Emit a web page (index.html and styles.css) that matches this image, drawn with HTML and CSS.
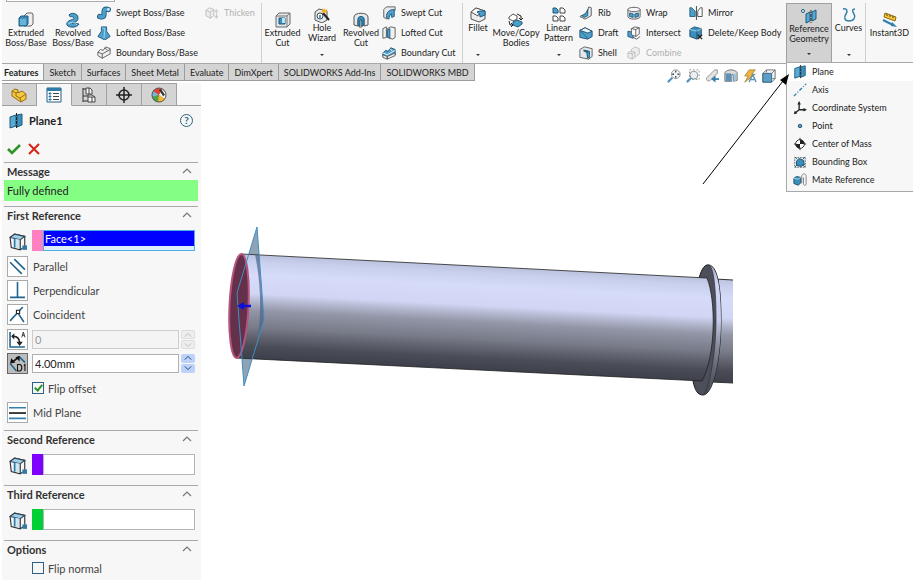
FILE: index.html
```html
<!DOCTYPE html>
<html lang="en">
<head>
<meta charset="utf-8">
<title>Plane1</title>
<link rel="stylesheet" href="styles.css">
</head>
<body>
<svg class="sprite" aria-hidden="true">
  <symbol id="extrude" viewBox="0 0 16 16"><path d="M6 4l3-3h5l1 1v10l-2 2H6z" fill="#eee" stroke="#666"/><path d="M1 6l2-2h7v8l-2 2H1z" fill="#3c8fbd" stroke="#1c5a7d"/><path d="M2 7h6v6H2z" fill="#68b3da"/></symbol>
  <symbol id="revolve" viewBox="0 0 16 16"><path d="M4 3c2-3 9-2 9 3 0 4-3 4-6 5l7 1c-2 4-10 4-12 1-1-2 1-4 4-5s4-2 2-3-3 1-4-2z" fill="#4f9fcb" stroke="#1c5a7d"/><path d="M3 12c3-2 5-3 9 1" fill="none" stroke="#b5dcf0"/></symbol>
  <symbol id="sweep" viewBox="0 0 16 16"><path d="M3 12c6 2 5-2 5-5s1-4 5-3" fill="none" stroke="#1c5a7d" stroke-width="6" stroke-linecap="round"/><path d="M3 12c6 2 5-2 5-5s1-4 5-3" fill="none" stroke="#4f9fcb" stroke-width="4" stroke-linecap="round"/><circle cx="13" cy="4" r="1.6" fill="#c4e3f3"/></symbol>
  <symbol id="loft" viewBox="0 0 16 16"><path d="M5 1h6l0 5 4 6-6 4-8-4 4-6z" fill="#4f9fcb" stroke="#1c5a7d"/><path d="M6 2l3 1-1 11" fill="none" stroke="#a7d6ee"/></symbol>
  <symbol id="boundary" viewBox="0 0 16 16"><path d="M1 7l3-3 3 1 3-4 5 2v6l-9 5-5-3z" fill="#f1f1f1" stroke="#555"/><path d="M1 7l5 2 9-5M6 9v5M9 2l3 3" fill="none" stroke="#555"/></symbol>
  <symbol id="thicken" viewBox="0 0 16 16"><path d="M1 5l4-3 5 2v7l-4 3-5-3z" fill="#eee" stroke="#bbb"/><path d="M1 5l5 2 4-3M6 7v7M13 6v7M11 11l2 3 2-3M11 7l2-3 2 3" fill="none" stroke="#bbb"/></symbol>
  <symbol id="cut" viewBox="0 0 16 16"><path d="M1 4l3-3h11v11l-3 3H1z" fill="#e4e6e8" stroke="#666"/><path d="M1 4h11v11M12 4l3-3" fill="none" stroke="#777"/><path d="M4 6h6v6H4z" fill="#3c8fbd" stroke="#1c5a7d"/><path d="M7 6h3v5H7z" fill="#b9e0f3"/></symbol>
  <symbol id="wizard" viewBox="0 0 16 16"><path d="M1 5l4-3 8 2v9l-5 3-7-3z" fill="#e7e8ea" stroke="#555"/><circle cx="6" cy="9" r="3" fill="#fff" stroke="#444"/><path d="M5 8h2v3H5z" fill="#4f9fcb"/><path d="M9 6l6 7" stroke="#222" stroke-width="2"/><path d="M8 1l1 2 2-2 0 2 3-1-2 2 2 1-4 1-3-1 1-1z" fill="#f2b02c"/></symbol>
  <symbol id="revcut" viewBox="0 0 16 16"><path d="M1 5c0-5 14-5 14 0v8l-4 1V7H9v8L6 15V8l-1 0v6l-4-1z" fill="#e9eaec" stroke="#555"/><path d="M5 6c1-2 5-2 6 0v7l-2 1V8H7v6l-2-1z" fill="#3c8fbd" stroke="#1c5a7d"/></symbol>
  <symbol id="sweptcut" viewBox="0 0 16 16"><path d="M2 4l3-3h10v4l-3 1-6 9-4-2z" fill="#e9eaec" stroke="#555"/><path d="M5 13c0-6 3-9 9-9v8l-3 1V9c-2 1-3 3-3 6z" fill="#4f9fcb" stroke="#1c5a7d"/></symbol>
  <symbol id="loftcut" viewBox="0 0 16 16"><path d="M1 3l4-2v12l-4 1zM6 3l4-2 5 1v11l-3 2-6-2z" fill="#f0f0f0" stroke="#555"/><path d="M6 5l3-2v11l-3-2z" fill="#4f9fcb" stroke="#1c5a7d"/></symbol>
  <symbol id="boundcut" viewBox="0 0 16 16"><path d="M1 8l3-3 3 1 3-4 5 2v6l-9 4-5-2z" fill="#4f9fcb" stroke="#1c4866"/><path d="M1 8l5 2 9-5M9 3l3 3" fill="none" stroke="#fff"/><path d="M1 10l5 2v3l-5-2zM6 12l9-4v3l-9 4z" fill="#eee" stroke="#555"/></symbol>
  <symbol id="fillet" viewBox="0 0 16 16"><path d="M1 5l5-4 9 3v8l-6 3-8-3z" fill="#ececee" stroke="#555"/><path d="M1 5l5-4 9 3-2 1c-3 0-5 2-5 4z" fill="#f8f8f8" stroke="#555"/><path d="M7 5l3-1 5 0v4l-5 2c0-3-1-4-3-5z" fill="#4f9fcb" stroke="#1c5a7d"/></symbol>
  <symbol id="move" viewBox="0 0 16 16"><path d="M1 5l4-3 4 2v3L5 9 1 7z" fill="#fff" stroke="#555"/><path d="M5 10l4-2 5 2v2l-4 3-5-2z" fill="#4f9fcb" stroke="#1c5a7d"/><path d="M9 2l4 2v3M11 6l2 2 2-2M1 9l1 4h2M3 11l2 2-2 2" fill="none" stroke="#222"/></symbol>
  <symbol id="pattern" viewBox="0 0 16 16"><g fill="#fff" stroke="#444"><path d="M9 1h3l2 2v3H9z"/><path d="M2 9h3l2 2v3H2zM9 9h3l2 2v3H9z"/></g><path d="M2 1h3l2 2v3H2z" fill="#4f9fcb" stroke="#1c5a7d"/></symbol>
  <symbol id="rib" viewBox="0 0 16 16"><path d="M11 1l3 1v9l-7 4-6-3 8-4z" fill="#e5e6e8" stroke="#555"/><path d="M10 4v7l-4 2-3-2c3 0 5-3 7-7z" fill="#4f9fcb" stroke="#1c5a7d"/></symbol>
  <symbol id="draft" viewBox="0 0 16 16"><path d="M1 5l6-3 8 4v6l-5 3-9-2z" fill="#4f9fcb" stroke="#1c4866"/><path d="M1 5l6-3 8 4-5 2z" fill="#e9f4fa" stroke="#1c4866"/><path d="M2 6l8 8" stroke="#1c5a7d"/></symbol>
  <symbol id="shell" viewBox="0 0 16 16"><path d="M1 4l5-3 9 2v9l-4 3-10-2z" fill="#e6e7e9" stroke="#555"/><path d="M5 4l6 1v9l-2-1V8L5 6z" fill="#245f80"/><path d="M9 8l3-2v7l-2 1z" fill="#4f9fcb" stroke="#1c5a7d"/></symbol>
  <symbol id="wrap" viewBox="0 0 16 16"><path d="M1 4v8c0 4 14 4 14 0V4z" fill="#e6e7e9" stroke="#555"/><ellipse cx="8" cy="4" rx="7" ry="2.5" fill="#f6f6f6" stroke="#555"/><path d="M3 8l4 1v4l-4-1zM9 9l4-1v4l-4 1z" fill="#4f9fcb" stroke="#1c5a7d"/></symbol>
  <symbol id="intersect" viewBox="0 0 16 16"><path d="M1 6l6 1v7l-6-2z" fill="#4f9fcb" stroke="#1c5a7d"/><path d="M5 3l4-2 5 1v7l-4 3-5-2z" fill="#fafafa" stroke="#555"/><path d="M5 3l5 1v8M10 4l4-2M7 13l4 2 4-3" fill="none" stroke="#555"/></symbol>
  <symbol id="combine" viewBox="0 0 16 16"><path d="M5 4l4-3 5 2v6l-4 3-5-2z" fill="#eee" stroke="#bbb"/><path d="M1 8l3-2 5 1v6l-3 2-5-2zM1 8l5 1 3-2M6 9v6" fill="#eee" stroke="#bbb"/></symbol>
  <symbol id="mirror" viewBox="0 0 16 16"><path d="M1 2h2l4 4v6H1z" fill="#4f9fcb" stroke="#1c5a7d"/><path d="M8.500 0v16" stroke="#333"/><path d="M15 2h-2l-3 4v6h5z" fill="#fff" stroke="#444"/></symbol>
  <symbol id="delbody" viewBox="0 0 16 16"><path d="M1 4l5-3 8 2v8l-5 4-8-3z" fill="#3c8fbd" stroke="#1c4866"/><path d="M1 4l8 2 5-3" fill="none" stroke="#a7d6ee"/><path d="M9 6v8" stroke="#1c4866"/><path d="M10 10l5 5M15 10l-5 5" stroke="#222" stroke-width="1.500"/></symbol>
  <symbol id="plane" viewBox="0 0 16 16"><path d="M2 4l6-2v11l-6 2z" fill="#58a9d3" stroke="#1c5a7d"/><path d="M9 2l5-1v11l-5 2z" fill="#3c8fbd" stroke="#1c5a7d"/><path d="M8.500 0v16" stroke="#222" stroke-dasharray="3 1"/></symbol>
  <symbol id="refgeo" viewBox="0 0 16 16"><circle cx="2" cy="3" r="1.500" fill="#fff" stroke="#1c5a7d"/><path d="M5 6l4-2v9l-4 2z" fill="#58a9d3" stroke="#1c5a7d"/><path d="M11 4l4-2v9l-4 2z" fill="#58a9d3" stroke="#1c5a7d"/><path d="M10 2v13" stroke="#222" stroke-dasharray="3 1"/></symbol>
  <symbol id="curves" viewBox="0 0 16 16"><path d="M2 2c4-1 5 2 3 5s-2 7 3 7 7-4 5-7-2-5 1-5" fill="none" stroke="#3580ab" stroke-width="1.500"/></symbol>
  <symbol id="instant" viewBox="0 0 16 16"><path d="M3 1l11 4-1 4L2 5z" fill="#f5c33c" stroke="#8a6914"/><path d="M5 2v2M8 3v2M11 4v2" stroke="#5d460b"/><path d="M1 8l10 5" stroke="#2c7eb0" stroke-width="2"/><path d="M10 10l5 5-6-1z" fill="#2c7eb0"/></symbol>
  <symbol id="axis" viewBox="0 0 16 16"><path d="M1 15L15 1" stroke="#2d7ca8" stroke-width="1.500" stroke-dasharray="4 2 1 2"/></symbol>
  <symbol id="coord" viewBox="0 0 16 16"><path d="M7 2v8h7M7 10l-5 4" fill="none" stroke="#222" stroke-width="1.500"/><path d="M7 0l2 4H5zM16 10l-4-2v4zM1 15l1-4 3 3z" fill="#222"/></symbol>
  <symbol id="point" viewBox="0 0 16 16"><circle cx="8" cy="8" r="2" fill="#4f9fcb" stroke="#1c4866"/></symbol>
  <symbol id="mass" viewBox="0 0 16 16"><path d="M8 1v14M1 8h14" stroke="#222"/><circle cx="8" cy="8" r="5" fill="#fff" stroke="#222"/><path d="M8 8V3a5 5 0 0 1 5 5zM8 8v5a5 5 0 0 1-5-5z" fill="#222"/></symbol>
  <symbol id="bbox" viewBox="0 0 16 16"><path d="M2 3h12v11H2z" fill="none" stroke="#555" stroke-dasharray="2 1"/><path d="M4 7l3-3 5 2 1 5-4 2-5-1z" fill="#3c8fbd" stroke="#1c4866"/><path d="M2 2l3 3M14 2l-3 3M2 14l3-3M14 14l-3-3" stroke="#245f80"/></symbol>
  <symbol id="mate" viewBox="0 0 16 16"><path d="M1 6l3-2 5 1v6l-3 3-5-2z" fill="#3c8fbd" stroke="#1c4866"/><path d="M1 6l5 1 3-2" fill="none" stroke="#b5dcf0"/><path d="M10 12V4c0-4 5-4 5 0v8c0 3-3 3-3 0V5" fill="none" stroke="#777"/></symbol>
  <symbol id="part" viewBox="0 0 16 16"><path d="M1 4l3-2 3 1v3l2-1 2-1 4 3v5l-5 3-9-6z" fill="#f6c843" stroke="#93700f"/><path d="M1 4l4 2v3l4 2 6-4M9 11l1 4M5 6l2-1" fill="none" stroke="#93700f"/></symbol>
  <symbol id="props" viewBox="0 0 16 16"><path d="M1 1h14v14H1z" fill="#fff" stroke="#235f86"/><path d="M1 1h14v3H1z" fill="#2d7ca8"/><path d="M3 6h2v1H3zM3 9h2v1H3zM3 12h2v1H3z" fill="#2d7ca8" stroke="#2d7ca8"/><path d="M7 6.500h6M7 9.500h6M7 12.500h6" stroke="#444"/></symbol>
  <symbol id="config" viewBox="0 0 16 16"><path d="M2 1v14M2 2h4M2 9h5M2 14h5" fill="none" stroke="#333"/><path d="M5 1h4l2 2v4H5zM7 8h4l3 2v5H7z" fill="#f5f5f5" stroke="#444"/><path d="M7 10h4v5M11 10l3 0M8 1v6" fill="none" stroke="#444"/></symbol>
  <symbol id="target" viewBox="0 0 16 16"><circle cx="8" cy="8" r="5" fill="none" stroke="#222" stroke-width="1.500"/><path d="M8 0v16M0 8h16" stroke="#222" stroke-width="1.500"/></symbol>
  <symbol id="ball" viewBox="0 0 16 16"><circle cx="8" cy="8" r="7" fill="#e0432d"/><path d="M8 8L2 4a7 7 0 0 0-1 6z" fill="#75b8dc"/><path d="M8 8l-7 2a7 7 0 0 0 6 5z" fill="#49a84b"/><path d="M8 8l-1 7a7 7 0 0 0 7-3z" fill="#f3bb30"/><path d="M8 8l3-6a7 7 0 0 1 3 10z" fill="#eee"/><path d="M8 3l2-1 4 6-2 1z" fill="#333"/><circle cx="8" cy="8" r="7" fill="none" stroke="#555"/></symbol>
  <symbol id="face" viewBox="0 0 16 16"><path d="M1 4l4-3 9 2v9l-4 3-8-2z" fill="#f4f5f6" stroke="#333"/><path d="M1 4l4-3 9 2-4 3z" fill="#9fd0ea" stroke="#345"/><path d="M5 5l5 1v8l-5-1z" fill="#cfe6f3"/><path d="M10 6v9" stroke="#333"/><path d="M5 5v8" stroke="#2d7ca8" stroke-width="1.500"/><path d="M12 11h4v4h-4z" fill="#2d7ca8"/></symbol>
  <symbol id="parallel" viewBox="0 0 16 16"><path d="M1 4l11 11M5 1l10 10" stroke="#1f648d" stroke-width="1.500"/></symbol>
  <symbol id="perp" viewBox="0 0 16 16"><path d="M8 0v14M1 14.500h14" stroke="#1f648d" stroke-width="1.500"/></symbol>
  <symbol id="coin" viewBox="0 0 16 16"><path d="M1 14L13 1M8 6l6 9" stroke="#1f648d" stroke-width="1.500"/><path d="M7 4h3v3H7z" fill="#fff" stroke="#222"/></symbol>
  <symbol id="angle" viewBox="0 0 16 16"><path d="M1 1v14h14" fill="none" stroke="#1f648d" stroke-width="1.500"/><path d="M4 5c4 0 6 3 6 7" fill="none" stroke="#222" stroke-width="1.500"/><path d="M2 5l3-3v6zM10 14l-3-4h6z" fill="#222"/><path d="M12 6l1.500-5 1.500 5M12.500 4h2" fill="none" stroke="#222" stroke-width=".8"/></symbol>
  <symbol id="dist" viewBox="0 0 16 16"><path d="M1 8l6 7M9 1l6 6" stroke="#1f648d" stroke-width="1.500"/><path d="M3 7l6-5" stroke="#111" stroke-width="1.500"/><path d="M1 8l1-5 4 4zM10 1l0 5-4-4z" fill="#111"/><path d="M8 9v6h2q2 0 2-3t-2-3zM14 10l1-1v6" fill="none" stroke="#111"/></symbol>
  <symbol id="mid" viewBox="0 0 16 16"><path d="M0 3.500h16M0 13.500h16" stroke="#3580ab" stroke-width="1.500"/><path d="M0 8.500h16" stroke="#111" stroke-width="1.500"/></symbol>
  <symbol id="caret" viewBox="0 0 10 10"><path d="M1 7l4-4 4 4" fill="none" stroke="currentColor" stroke-width="1.200"/></symbol>
  <symbol id="zoomfit" viewBox="0 0 16 16"><circle cx="10" cy="6" r="5" fill="#f4f7fa" stroke="#888"/><path d="M10 2v2M10 8v2M6 6h2M12 6h2" stroke="#444" stroke-width="1.500"/><path d="M6 10l-5 5" stroke="#5a93bb" stroke-width="2.500"/></symbol>
  <symbol id="zoomarea" viewBox="0 0 16 16"><path d="M4 1h11v11H4z" fill="none" stroke="#888" stroke-dasharray="2 2"/><circle cx="9" cy="7" r="4.500" fill="#e8f0f6" stroke="#888"/><path d="M6 10l-5 5" stroke="#5a93bb" stroke-width="2.500"/></symbol>
  <symbol id="prev" viewBox="0 0 16 16"><path d="M14 1h-3l-9 9c-1 4 2 4 4 3l8-8z" fill="#e4e4e4" stroke="#888"/><path d="M16 11.500h-5" stroke="#3580ab" stroke-width="2"/><path d="M7 11.500l5-4v8z" fill="#3580ab"/></symbol>
  <symbol id="section" viewBox="0 0 16 16"><path d="M1 4c3-4 11-4 14 0v9l-4 1V7L9 6v8H1z" fill="#d8dadc" stroke="#666"/><path d="M2 5h6v9H2z" fill="#5b93bb"/><path d="M11 6l3-1v8l-3 1z" fill="#9cc4df"/></symbol>
  <symbol id="style" viewBox="0 0 16 16"><path d="M7 1l7 0-4 5h4l-12 9 4-7H2z" fill="#f3b43b" stroke="#a98540"/><path d="M7 15l4-9 4 9M8 12h6" fill="none" stroke="#5a93bb" stroke-width="1.500"/></symbol>
  <symbol id="view" viewBox="0 0 16 16"><path d="M1 5l4-4h10v10l-4 4H1z" fill="#f0f2f4" stroke="#666"/><path d="M1 5h10v10H1z" fill="#5b9fc9" stroke="#33607e"/><path d="M5 1v3M11 5l4-4M12 11h3" fill="none" stroke="#667"/></symbol>
</svg>

<header class="ribbon">
  <div class="search-edge"></div>
  <button class="tool low"><svg class="icon"><use href="#extrude"/></svg>Extruded<br>Boss/Base</button>
  <button class="tool low"><svg class="icon"><use href="#revolve"/></svg>Revolved<br>Boss/Base</button>
  <div class="stack">
    <button class="mini"><svg class="icon"><use href="#sweep"/></svg>Swept Boss/Base</button>
    <button class="mini"><svg class="icon"><use href="#loft"/></svg>Lofted Boss/Base</button>
    <button class="mini"><svg class="icon"><use href="#boundary"/></svg>Boundary Boss/Base</button>
  </div>
  <div class="stack divided">
    <button class="mini" disabled><svg class="icon"><use href="#thicken"/></svg>Thicken</button>
  </div>
  <button class="tool low"><svg class="icon"><use href="#cut"/></svg>Extruded<br>Cut</button>
  <button class="tool"><svg class="icon"><use href="#wizard"/></svg>Hole<br>Wizard<i class="drop"></i></button>
  <button class="tool low"><svg class="icon"><use href="#revcut"/></svg>Revolved<br>Cut</button>
  <div class="stack divided">
    <button class="mini"><svg class="icon"><use href="#sweptcut"/></svg>Swept Cut</button>
    <button class="mini"><svg class="icon"><use href="#loftcut"/></svg>Lofted Cut</button>
    <button class="mini"><svg class="icon"><use href="#boundcut"/></svg>Boundary Cut</button>
  </div>
  <button class="tool"><svg class="icon"><use href="#fillet"/></svg>Fillet<i class="drop"></i></button>
  <button class="tool low"><svg class="icon"><use href="#move"/></svg>Move/Copy<br>Bodies</button>
  <button class="tool"><svg class="icon"><use href="#pattern"/></svg>Linear<br>Pattern<i class="drop"></i></button>
  <div class="stack">
    <button class="mini"><svg class="icon"><use href="#rib"/></svg>Rib</button>
    <button class="mini"><svg class="icon"><use href="#draft"/></svg>Draft</button>
    <button class="mini"><svg class="icon"><use href="#shell"/></svg>Shell</button>
  </div>
  <div class="stack">
    <button class="mini"><svg class="icon"><use href="#wrap"/></svg>Wrap</button>
    <button class="mini"><svg class="icon"><use href="#intersect"/></svg>Intersect</button>
    <button class="mini" disabled><svg class="icon"><use href="#combine"/></svg>Combine</button>
  </div>
  <div class="stack">
    <button class="mini"><svg class="icon"><use href="#mirror"/></svg>Mirror</button>
    <button class="mini"><svg class="icon"><use href="#delbody"/></svg>Delete/Keep Body</button>
  </div>
  <div class="menu-host">
    <button class="tool pressed" aria-expanded="true"><svg class="icon"><use href="#refgeo"/></svg>Reference<br>Geometry<i class="drop"></i></button>
    <div class="menu">
      <button class="item current"><svg class="icon"><use href="#plane"/></svg>Plane</button>
      <button class="item"><svg class="icon"><use href="#axis"/></svg>Axis</button>
      <button class="item"><svg class="icon"><use href="#coord"/></svg>Coordinate System</button>
      <button class="item"><svg class="icon"><use href="#point"/></svg>Point</button>
      <button class="item"><svg class="icon"><use href="#mass"/></svg>Center of Mass</button>
      <button class="item"><svg class="icon"><use href="#bbox"/></svg>Bounding Box</button>
      <button class="item"><svg class="icon"><use href="#mate"/></svg>Mate Reference</button>
    </div>
  </div>
  <button class="tool divided"><svg class="icon"><use href="#curves"/></svg>Curves<i class="drop"></i></button>
  <button class="tool low"><svg class="icon"><use href="#instant"/></svg>Instant3D</button>
</header>

<div class="tab-row">
  <nav class="tabs">
    <a class="tab active" href="#">Features</a><a class="tab" href="#">Sketch</a><a class="tab" href="#">Surfaces</a><a class="tab" href="#">Sheet Metal</a><a class="tab" href="#">Evaluate</a><a class="tab" href="#">DimXpert</a><a class="tab" href="#">SOLIDWORKS Add-Ins</a><a class="tab" href="#">SOLIDWORKS MBD</a>
  </nav>
  <div class="view-tools">
    <button aria-label="Zoom to fit"><svg class="icon"><use href="#zoomfit"/></svg></button>
    <button aria-label="Zoom to area"><svg class="icon"><use href="#zoomarea"/></svg></button>
    <button aria-label="Previous view"><svg class="icon"><use href="#prev"/></svg></button>
    <button aria-label="Section view"><svg class="icon"><use href="#section"/></svg></button>
    <button aria-label="Display style"><svg class="icon"><use href="#style"/></svg></button>
    <button aria-label="View orientation"><svg class="icon"><use href="#view"/></svg></button>
  </div>
</div>

<div class="workspace">
  <aside class="panel">
    <div class="panel-tabs">
      <button aria-label="Feature tree"><svg><use href="#part"/></svg></button>
      <button class="active" aria-label="Properties"><svg><use href="#props"/></svg></button>
      <button aria-label="Configurations"><svg><use href="#config"/></svg></button>
      <button aria-label="Dimensions"><svg><use href="#target"/></svg></button>
      <button aria-label="Appearances"><svg><use href="#ball"/></svg></button>
      <span class="rest"></span>
    </div>
    <div class="title">
      <svg class="glyph"><use href="#plane"/></svg><h1>Plane1</h1>
      <button class="help" aria-label="Help">?</button>
    </div>
    <div class="confirm">
      <button aria-label="OK"><svg viewBox="0 0 14 12"><path d="M1 6l4 4 8-8" fill="none" stroke="#2c9420" stroke-width="2.500"/></svg></button>
      <button aria-label="Cancel"><svg viewBox="0 0 14 12"><path d="M2 1l10 10M12 1L2 11" fill="none" stroke="#d82414" stroke-width="2"/></svg></button>
    </div>

    <section>
      <h2>Message<svg><use href="#caret"/></svg></h2>
      <p class="message">Fully defined</p>
    </section>

    <section class="first">
      <h2>First Reference<svg><use href="#caret"/></svg></h2>
      <div class="pick">
        <svg class="glyph"><use href="#face"/></svg>
        <span class="swatch pink"></span>
        <div class="entry selected"><input type="text" value="Face&lt;1&gt;" aria-label="First reference" readonly></div>
      </div>
      <div class="rows">
        <div class="row"><button class="toggle" id="b-par" aria-labelledby="l-par"><svg><use href="#parallel"/></svg></button><label id="l-par" for="b-par">Parallel</label></div>
        <div class="row"><button class="toggle" id="b-perp" aria-labelledby="l-perp"><svg><use href="#perp"/></svg></button><label id="l-perp" for="b-perp">Perpendicular</label></div>
        <div class="row"><button class="toggle" id="b-coin" aria-labelledby="l-coin"><svg><use href="#coin"/></svg></button><label id="l-coin" for="b-coin">Coincident</label></div>
      </div>
      <div class="rows">
        <div class="row"><button class="toggle" aria-label="At angle"><svg><use href="#angle"/></svg></button><input type="text" class="value" value="0" aria-label="Angle" disabled><span class="spin off"><button aria-label="Increase angle" disabled><svg><use href="#caret"/></svg></button><button aria-label="Decrease angle" disabled><svg><use href="#caret"/></svg></button></span></div>
        <div class="row"><button class="toggle on" aria-label="Offset distance"><svg><use href="#dist"/></svg></button><input type="text" class="value" value="4.00mm" aria-label="Offset distance"><span class="spin"><button aria-label="Increase distance"><svg><use href="#caret"/></svg></button><button aria-label="Decrease distance"><svg><use href="#caret"/></svg></button></span></div>
      </div>
      <div class="rows">
        <label class="check"><input type="checkbox" checked>Flip offset</label>
        <div class="row"><button class="toggle" id="b-mid" aria-labelledby="l-mid"><svg><use href="#mid"/></svg></button><label id="l-mid" for="b-mid">Mid Plane</label></div>
      </div>
    </section>

    <section>
      <h2>Second Reference<svg><use href="#caret"/></svg></h2>
      <div class="pick">
        <svg class="glyph"><use href="#face"/></svg>
        <span class="swatch violet"></span>
        <div class="entry"><input type="text" aria-label="Second reference"></div>
      </div>
    </section>

    <section>
      <h2>Third Reference<svg><use href="#caret"/></svg></h2>
      <div class="pick">
        <svg class="glyph"><use href="#face"/></svg>
        <span class="swatch green"></span>
        <div class="entry"><input type="text" aria-label="Third reference"></div>
      </div>
    </section>

    <section class="options">
      <h2>Options<svg><use href="#caret"/></svg></h2>
      <label class="check"><input type="checkbox">Flip normal</label>
    </section>
  </aside>

  <main class="viewport">
    <svg class="scene" viewBox="201 83 712 497" preserveAspectRatio="xMinYMin meet" role="img" aria-label="Tube with offset plane">
      <defs>
        <linearGradient id="steel" gradientUnits="userSpaceOnUse" x1="241" y1="253" x2="235.600" y2="358">
          <stop offset="0" stop-color="#b9c0da"/><stop offset=".08" stop-color="#c9d0ee"/><stop offset=".2" stop-color="#d5dbf9"/><stop offset=".38" stop-color="#d0d6f4"/><stop offset=".45" stop-color="#b4b9d0"/><stop offset=".54" stop-color="#9296a7"/><stop offset=".7" stop-color="#787b88"/><stop offset=".88" stop-color="#4a4d57"/><stop offset="1" stop-color="#3d404a"/>
        </linearGradient>
        <linearGradient id="rim" x1="0" y1="0" x2="0" y2="1">
          <stop offset="0" stop-color="#a5abc4"/><stop offset=".15" stop-color="#d0d6f4"/><stop offset=".42" stop-color="#c8ceec"/><stop offset=".6" stop-color="#8e92a2"/><stop offset=".8" stop-color="#62656f"/><stop offset="1" stop-color="#454751"/>
        </linearGradient>
      </defs>
      <path d="M257 227L264 320 244 386 237 293z" fill="#8fa3b5"/>
      <path d="M715 279L733 280V383L712 382z" fill="url(#steel)"/>
      <path d="M715 279L733 280M712 382L733 383" stroke="#333"/>
      <path d="M699 278C702 268 705 264 709 265C717 266 721 285 721 320C721 355 714 395 703 395C698 395 695 391 693 381z" fill="#4c4f5a" stroke="#222"/>
      <path d="M709 265C718 268 721 290 721 320C721 355 714 395 703 395C710 388 716 350 716 320C716 290 714 268 709 265z" fill="url(#rim)"/>
      <path d="M709 265C714 268 716 290 716 320C716 350 710 388 703 395" fill="none" stroke="#2c2e36" stroke-width=".7"/>
      <path d="M241 254L707 278C716 300 716 355 702 381L236 358z" fill="url(#steel)"/>
      <path d="M241 254L707 278C716 300 716 355 702 381L236 358" fill="none" stroke="#222" stroke-width=".8"/>
      <path d="M255 254L259 254 264 320 258 338C262 305 260 280 255 254z" fill="#4d6286" fill-opacity=".7"/>
      <ellipse cx="239" cy="306" rx="9.500" ry="52" transform="rotate(2.700 239 306)" fill="#653049" stroke="#b4547f" stroke-width="2"/>
      <path d="M257 227L264 320 244 386 237 293z" fill="none" stroke="#3f8fc4"/>
      <path d="M251 306h-8" stroke="#0c10d8" stroke-width="2.500"/><path d="M237 306l7-4v8z" fill="#0c10d8"/>
      <path d="M703 184L783 81" stroke="#000"/><path d="M789 74L786 85 780 80z" fill="#000"/>
    </svg>
  </main>
</div>
</body>
</html>
```
FILE: styles.css
```css
* { box-sizing: border-box; }

body {
  margin: 0;
  min-height: 100vh;
  display: flex;
  flex-direction: column;
  background: #fff;
  color: #222;
  font-family: Lato, "Open Sans", sans-serif;
  font-size: 11px;
}

button, input { font: inherit; color: inherit; }
button { border: 0; padding: 0; background: none; }
h1, h2, p { margin: 0; }
svg { display: block; flex: none; }
.sprite { position: absolute; width: 0; height: 0; }
.icon { width: 14px; height: 14px; }

/* Ribbon */
.ribbon {
  position: relative;
  display: grid;
  grid-template-columns: 48px 46px 108px 58px 41px 38px 40px 82px 30px 46px 39px 48px 62px 98px 46px 34px minmax(46px, 1fr);
  height: 64px;
  margin-left: 2px;
  padding-top: 3px;
  background: #f7f7f7;
  border-bottom: 1px solid #a9a9a9;
  font-size: 9px;
  line-height: 10px;
}
.search-edge {
  position: absolute;
  left: 4px;
  top: 0;
  width: 109px;
  height: 2px;
  background: #fff;
  border: 1px solid #aaa;
  border-top: 0;
}
.tool {
  position: relative;
  display: flex;
  flex-direction: column;
  align-items: center;
  padding-top: 4px;
  white-space: nowrap;
  line-height: 10px;
}
.tool .icon { width: 16px; height: 16px; }
.tool.low { padding-top: 9px; }
.drop {
  position: absolute;
  left: 50%;
  bottom: 7px;
  margin-left: -2px;
  border: 2px solid transparent;
  border-top-color: #333;
  border-bottom: 0;
}
.stack { display: flex; flex-direction: column; padding-left: 1px; }
.mini { display: flex; align-items: center; gap: 5px; height: 20px; white-space: nowrap; }
.mini:disabled { color: #b0b0b0; }
.divided { border-right: 1px solid #cfcfcf; }
.menu-host { position: relative; display: grid; }
.pressed { background: #d2d2d2; border: 1px solid #a0a0a0; }
.menu {
  position: absolute;
  z-index: 2;
  left: 0;
  top: 59px;
  width: 128px;
  padding-bottom: 2px;
  background: #f7f7f7;
  border: 1px solid #a9a9a9;
}
.item {
  display: flex;
  align-items: center;
  gap: 5px;
  width: 100%;
  height: 18px;
  padding-left: 6px;
  white-space: nowrap;
}
.item.current { background: #fff; }

/* Command tabs */
.tab-row { display: flex; justify-content: space-between; height: 19px; margin-left: 2px; }
.tabs { display: flex; height: 17px; font-size: 9px; line-height: 17px; }
.tab {
  padding: 0 5px;
  background: #d4d4d4;
  border: 1px solid #9c9c9c;
  border-width: 0 1px 1px 0;
  text-decoration: none;
  color: inherit;
  white-space: nowrap;
}
.tab.active { background: #f7f7f7; padding-left: 2px; font-weight: 700; }
.view-tools { display: flex; gap: 5px; padding-top: 5px; margin-right: 137px; }

/* Property panel */
.workspace { display: flex; flex: 1; }
.panel { width: 199px; flex: none; margin-left: 2px; background: #f7f7f7; }
.panel-tabs { display: flex; height: 23px; }
.panel-tabs button {
  display: grid;
  place-items: center;
  width: 35px;
  background: #d4d4d4;
  border: 1px solid #a0a0a0;
  border-left-width: 0;
}
.panel-tabs svg { width: 16px; height: 16px; }
.panel-tabs .active { background: #f7f7f7; border-bottom-color: #f7f7f7; }
.rest { flex: 1; border-bottom: 1px solid #a0a0a0; }
.glyph { width: 16px; height: 16px; }
.title { display: flex; align-items: center; gap: 5px; height: 30px; padding: 0 8px 1px 6px; }
.title h1 { flex: 1; font-size: 11px; font-weight: 700; }
.help { width: 13px; height: 13px; border: 1px solid #2a6484; border-radius: 50%; color: #2a6484; font-size: 10px; font-weight: 700; line-height: 11px; }
.confirm { display: flex; gap: 6px; height: 26px; padding: 5px; }
.confirm svg { width: 14px; height: 12px; }
section { min-height: 44px; border-top: 1px solid #a9a9a9; margin-right: 3px; margin-left: 2px; }
section + section { min-height: 55px; }
section.options { min-height: 0; }
h2 { display: flex; justify-content: space-between; align-items: center; height: 17px; padding: 0 6px 1px 3px; color: #333; font-size: 11px; font-weight: 700; }
h2 svg { width: 10px; height: 10px; color: #777; }
.message { height: 21px; padding-left: 3px; background: #84ff84; line-height: 21px; }
.first { padding-bottom: 5px; }
.pick { display: flex; height: 21px; margin: 6px 3px 3px 5px; }
.pick .glyph { width: 18px; height: 18px; margin: 3px 5px 0 0; }
.swatch { width: 11px; }
.pink { background: #ff80c0; }
.violet { background: #8000ff; }
.green { background: #00d035; }
.entry { flex: 1; border: 1px solid #b4b4b8; background: #fff; display: flex; align-items: flex-start; }
.entry input { flex: 1; min-width: 0; height: 100%; border: 0; padding: 0 1px; background: none; }
.selected { border: 1px solid #50aee6; background: #dceefa; }
.entry.selected input { height: 15px; background: #00f; color: #fff; }
.rows { margin-bottom: 1px; padding-left: 3px; }
.row { display: flex; align-items: center; gap: 5px; height: 24px; padding-right: 3px; }
.row label, .check { color: #444; }
.toggle { display: grid; place-items: center; width: 21px; height: 21px; background: #fff; border: 1px solid #aaa; }
.toggle svg { width: 17px; height: 17px; }
.on { background: #bdbdbd; border-color: #666; }
.value { flex: 1; min-width: 0; height: 19px; border: 1px solid #b0b0b0; background: #fff; padding: 0 2px; margin: 0 -3px 0 -1px; }
.value:disabled { background: #f4f4f4; border-color: #ccc; color: #999; }
.spin { display: grid; gap: 1px; width: 14px; }
.spin button { display: grid; place-items: center; height: 9px; background: #bcd2fa; border-radius: 2px; color: #246; }
.spin svg { width: 8px; height: 8px; }
.spin button + button svg { transform: rotate(180deg); }
.off button { background: #eee; border: 1px solid #ddd; color: #bbb; }
.check { display: flex; align-items: center; gap: 4px; height: 24px; padding-left: 25px; }
.options .check { height: 20px; padding-left: 28px; }
.check input { appearance: none; width: 12px; height: 12px; margin: 0; border: 1px solid #2e6187; background: #f7f7f7; }
.check input:checked::before { content: ""; display: block; width: 3px; height: 6px; margin: 0 0 0 3px; border: solid #2c9420; border-width: 0 2px 2px 0; transform: rotate(40deg); box-sizing: content-box; }

/* Model view */
.viewport { flex: 1; min-width: 0; }
.scene { width: 100%; overflow: visible; position: relative; z-index: 3; pointer-events: none; }
```
